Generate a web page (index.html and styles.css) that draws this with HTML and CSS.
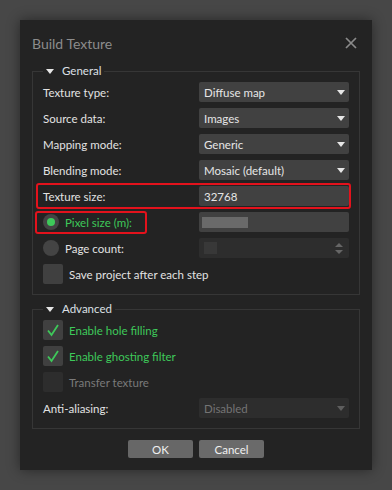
FILE: index.html
```html
<!DOCTYPE html>
<html lang="en">
<head>
    <meta charset="UTF-8">
    <meta name="viewport" content="width=device-width, initial-scale=1.0">
    <title>Build Texture</title>
    <link rel="stylesheet" href="styles.css">
</head>
<body>
    <div class="dialog">
        <div class="header">
            <span class="title">Build Texture</span>
            <svg class="close" width="12" height="12" viewBox="0 0 12 12">
                <path d="M1 1 L11 11 M11 1 L1 11" stroke="#8a8a8a" stroke-width="1.7" fill="none"/>
            </svg>
        </div>

        <fieldset class="group">
            <legend><span class="caret"></span>General</legend>
            <div class="rows">
                <div class="row">
                    <span class="label">Texture type:</span>
                    <div class="combo"><span>Diffuse map</span><span class="arrow"></span></div>
                </div>
                <div class="row">
                    <span class="label">Source data:</span>
                    <div class="combo"><span>Images</span><span class="arrow"></span></div>
                </div>
                <div class="row">
                    <span class="label">Mapping mode:</span>
                    <div class="combo"><span>Generic</span><span class="arrow"></span></div>
                </div>
                <div class="row">
                    <span class="label">Blending mode:</span>
                    <div class="combo"><span>Mosaic (default)</span><span class="arrow"></span></div>
                </div>
                <div class="row marked">
                    <span class="label">Texture size:</span>
                    <div class="field">32768</div>
                </div>
                <div class="row">
                    <span class="option marked-option">
                        <span class="radio checked"></span>
                        <span class="label green">Pixel size (m):</span>
                    </span>
                    <div class="field"><span class="blurred"></span></div>
                </div>
                <div class="row">
                    <span class="option">
                        <span class="radio"></span>
                        <span class="label">Page count:</span>
                    </span>
                    <div class="field disabled">
                        <span class="stub"></span>
                        <span class="spin"><span class="up"></span><span class="down"></span></span>
                    </div>
                </div>
                <div class="check-row">
                    <span class="checkbox"></span>
                    <span class="label">Save project after each step</span>
                </div>
            </div>
        </fieldset>

        <fieldset class="group advanced">
            <legend><span class="caret"></span>Advanced</legend>
            <div class="rows">
                <div class="check-row">
                    <span class="checkbox">
                        <svg width="20" height="20" viewBox="0 0 20 20"><path d="M5 10.5 L8.5 15 L15 5" stroke="#3ec95a" stroke-width="1.8" fill="none"/></svg>
                    </span>
                    <span class="label green">Enable hole filling</span>
                </div>
                <div class="check-row">
                    <span class="checkbox">
                        <svg width="20" height="20" viewBox="0 0 20 20"><path d="M5 10.5 L8.5 15 L15 5" stroke="#3ec95a" stroke-width="1.8" fill="none"/></svg>
                    </span>
                    <span class="label green">Enable ghosting filter</span>
                </div>
                <div class="check-row">
                    <span class="checkbox disabled"></span>
                    <span class="label muted">Transfer texture</span>
                </div>
                <div class="row">
                    <span class="label">Anti-aliasing:</span>
                    <div class="combo disabled"><span>Disabled</span><span class="arrow"></span></div>
                </div>
            </div>
        </fieldset>

        <div class="buttons">
            <button class="ok">OK</button>
            <button>Cancel</button>
        </div>
    </div>
</body>
</html>
```

FILE: styles.css
```css
body {
    margin: 0;
    padding: 20px;
    background-color: #474747;
    font-family: Lato, "Liberation Sans", sans-serif;
    font-size: 11.5px;
    color: #e2e2e2;
}
.dialog {
    width: 328px;
    height: 438px;
    padding: 0 12px 12px;
    background-color: #232323;
    box-shadow: 0 0 12px rgba(0,0,0,0.45);
}
.header {
    display: flex;
    justify-content: space-between;
    align-items: center;
    height: 20px;
    padding-top: 13px;
    margin-bottom: 10px;
}
.title {
    font-size: 14px;
    color: #8c8c8c;
}
.close {
    margin-right: 3px;
}
.group {
    margin: 0;
    padding: 0 10px 10px;
    border: 1px solid #363636;
}
.group.advanced {
    margin-top: 6px;
}
legend {
    padding: 0 3px;
    height: 16px;
    line-height: 16px;
    display: flex;
    align-items: center;
    color: #dde0e6;
}
.caret {
    width: 0;
    height: 0;
    border-left: 4px solid transparent;
    border-right: 4px solid transparent;
    border-top: 5px solid #e6e6e6;
    margin-right: 8px;
}
.rows {
    display: flex;
    flex-direction: column;
    gap: 6px;
    padding-top: 3px;
}
.row {
    display: grid;
    grid-template-columns: 156px 150px;
    align-items: center;
    height: 20px;
}
.marked, .marked-option {
    position: relative;
}
.marked::after {
    content: "";
    position: absolute;
    top: -3px;
    bottom: -3px;
    left: -7px;
    right: -2px;
    border: 2px solid #e3121c;
    border-radius: 3px;
}
.marked-option::after {
    content: "";
    position: absolute;
    top: -1px;
    bottom: -2px;
    left: -8px;
    width: 108px;
    border: 2px solid #e3121c;
    border-radius: 3px;
}
.option {
    display: flex;
    align-items: center;
    gap: 6px;
    height: 20px;
}
.green {
    color: #3ec95a;
}
.muted {
    color: #7a7a7a;
}
.combo, .field {
    height: 20px;
    box-sizing: border-box;
    display: flex;
    align-items: center;
    justify-content: space-between;
    padding: 0 4px 0 5px;
    background-color: #414141;
    border-radius: 2px;
    color: #e6e6e6;
}
.arrow {
    width: 0;
    height: 0;
    border-left: 4px solid transparent;
    border-right: 4px solid transparent;
    border-top: 5px solid #e6e6e6;
}
.combo.disabled, .field.disabled {
    background-color: #2d2d2d;
    color: #747474;
}
.combo.disabled .arrow {
    border-top-color: #5e5e5e;
}
.field {
    justify-content: flex-start;
}
.field.disabled {
    justify-content: space-between;
}
.blurred {
    width: 46px;
    height: 11px;
    margin-left: -2px;
    background-color: #6a6a6a;
    filter: blur(0.6px);
}
.stub {
    width: 13px;
    height: 12px;
    background-color: #383838;
}
.spin {
    display: flex;
    flex-direction: column;
    gap: 3px;
    margin-right: 2px;
}
.spin .up, .spin .down {
    width: 0;
    height: 0;
    border-left: 4px solid transparent;
    border-right: 4px solid transparent;
}
.spin .up {
    border-bottom: 4px solid #666;
}
.spin .down {
    border-top: 4px solid #666;
}
.radio {
    width: 16px;
    height: 16px;
    border-radius: 50%;
    background-color: #444;
    display: flex;
    align-items: center;
    justify-content: center;
}
.radio.checked::after {
    content: "";
    width: 8px;
    height: 8px;
    border-radius: 50%;
    background-color: #3ec95a;
}
.check-row {
    display: flex;
    align-items: center;
    gap: 6px;
    height: 20px;
}
.checkbox {
    width: 20px;
    height: 20px;
    border-radius: 2px;
    background-color: #404040;
    display: block;
}
.checkbox svg {
    display: block;
}
.checkbox.disabled {
    background-color: #2d2d2d;
}
.buttons {
    display: flex;
    justify-content: center;
    gap: 6px;
    margin-top: 11px;
}
button {
    width: 65px;
    height: 18px;
    padding: 0;
    border: none;
    border-radius: 2px;
    background-color: #6a6a6a;
    color: #f0f0f0;
    font-family: Lato, "Liberation Sans", sans-serif;
    font-size: 11.5px;
}
button.ok {
    background-color: #676767;
}
```
